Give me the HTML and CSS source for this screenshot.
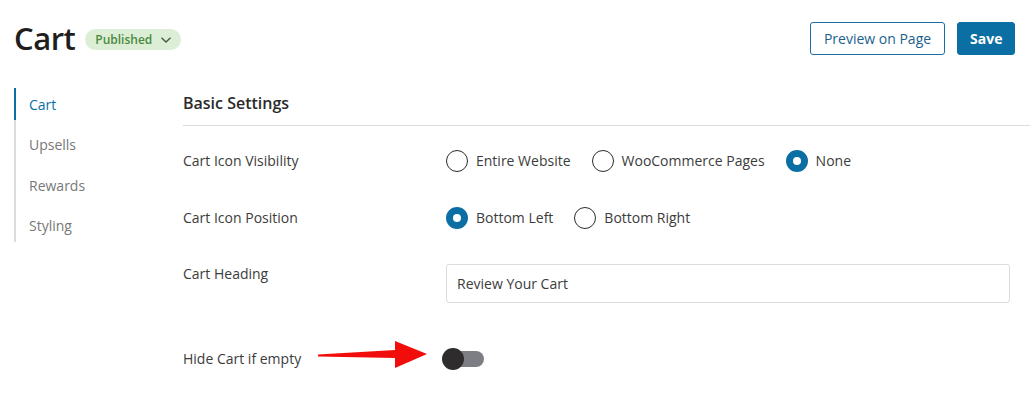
FILE: index.html
```html
<!DOCTYPE html>
<html>
<head>
<meta charset="utf-8">
<link rel="stylesheet" href="styles.css">
</head>
<body>
<header class="topbar">
  <div class="title-group">
    <h1 class="title">Cart</h1>
    <span class="badge">Published
      <svg class="chev" width="12" height="8" viewBox="0 0 12 8"><path d="M1.5 1.8 L6 6 L10.5 1.8" fill="none" stroke="#3d5a3a" stroke-width="1.3"/></svg>
    </span>
  </div>
  <div class="actions">
    <button class="btn btn-outline">Preview on Page</button>
    <button class="btn btn-primary">Save</button>
  </div>
</header>
<div class="layout">
  <nav class="sidenav">
    <a class="nav-item active">Cart</a>
    <a class="nav-item">Upsells</a>
    <a class="nav-item">Rewards</a>
    <a class="nav-item">Styling</a>
  </nav>
  <main class="content">
    <h2 class="section-title">Basic Settings</h2>
    <div class="row">
      <div class="label">Cart Icon Visibility</div>
      <div class="options">
        <label class="radio"><span class="dot"></span>Entire Website</label>
        <label class="radio"><span class="dot"></span>WooCommerce Pages</label>
        <label class="radio"><span class="dot on"></span>None</label>
      </div>
    </div>
    <div class="row">
      <div class="label">Cart Icon Position</div>
      <div class="options">
        <label class="radio"><span class="dot on"></span>Bottom Left</label>
        <label class="radio"><span class="dot"></span>Bottom Right</label>
      </div>
    </div>
    <div class="row row-top">
      <div class="label">Cart Heading</div>
      <div class="field">Review Your Cart</div>
    </div>
    <div class="row row-toggle">
      <div class="label">Hide Cart if empty</div>
      <div class="toggle"><span class="track"></span><span class="knob"></span></div>
      <svg class="arrow" width="112" height="32" viewBox="0 0 112 32"><path d="M0 13.5 L77 9 L77 0 L109 13 L77 27 L77 17 L0 15.5 Z" fill="#f20d0d"/></svg>
    </div>
  </main>
</div>
</body>
</html>
```

FILE: styles.css
```css
* { box-sizing: border-box; }
body {
  margin: 0;
  width: 1030px;
  height: 398px;
  background: #fff;
  font-family: "Open Sans", "Noto Sans", sans-serif;
  color: #3c3c3c;
  overflow: hidden;
}
.topbar {
  display: flex;
  justify-content: space-between;
  padding: 22px 15px 0 14px;
  height: 88px;
  align-items: flex-start;
}
.title-group {
  display: flex;
  align-items: center;
  gap: 10px;
  height: 33px;
}
.title {
  margin: 0;
  font-size: 31px;
  font-weight: 600;
  color: #1e1e1e;
  line-height: 33px;
  letter-spacing: -0.5px;
}
.badge {
  display: inline-flex;
  align-items: center;
  gap: 8px;
  height: 21px;
  padding: 0 9px 0 10px;
  border-radius: 11px;
  background: #dcefd6;
  color: #4b8a40;
  font-size: 12px;
  font-weight: 600;
  margin-top: 2px;
}
.actions {
  display: flex;
  gap: 12px;
}
.btn {
  font-family: inherit;
  height: 33px;
  border-radius: 3px;
  font-size: 14px;
  padding: 0 12px;
  cursor: pointer;
}
.btn-outline {
  width: 135px;
  background: #fff;
  border: 1px solid #1c6ea0;
  color: #1c5f8c;
}
.btn-primary {
  width: 58px;
  background: #0b6fa4;
  border: 1px solid #0b6fa4;
  color: #fff;
  font-weight: 700;
}
.layout {
  display: flex;
}
.sidenav {
  width: 169px;
  margin-left: 14px;
  display: flex;
  flex-direction: column;
  gap: 8.5px;
  border-left: 2px solid #dcdcde;
  align-self: flex-start;
  flex: none;
}
.nav-item {
  display: flex;
  align-items: center;
  height: 32px;
  padding-left: 13px;
  margin-left: -2px;
  border-left: 2px solid transparent;
  font-size: 14px;
  color: #787878;
}
.nav-item.active {
  border-left-color: #0b6fa4;
  color: #0b6fa4;
}
.content {
  flex: 1;
}
.section-title {
  margin: 0;
  padding: 3px 0 0 0;
  height: 34px;
  line-height: 24px;
  font-size: 16px;
  font-weight: 600;
  color: #2a2a2a;
  border-bottom: 1px solid #dcdcde;
  box-sizing: content-box;
}
.row {
  display: grid;
  grid-template-columns: 263px 1fr;
  align-items: center;
  height: 57px;
  padding-right: 20px;
  font-size: 14px;
  position: relative;
}
.row:nth-of-type(1) { margin-top: 6px; }
.row-top {
  align-items: start;
  padding-top: 18px;
  height: 84px;
}
.row-top .label { line-height: 20px; }
.options {
  display: flex;
  gap: 21px;
}
.radio {
  display: flex;
  align-items: center;
  gap: 8px;
  color: #3c3c3c;
}
.dot {
  width: 22px;
  height: 22px;
  border-radius: 50%;
  border: 1.5px solid #2c2c2c;
  flex: none;
}
.dot.on {
  border: 7px solid #0b6fa4;
}
.label {
  color: #3c3c3c;
}
.field {
  height: 39px;
  border: 1px solid #dcdcde;
  border-radius: 3px;
  display: flex;
  align-items: center;
  padding-left: 10px;
  color: #3c3c3c;
}
.toggle {
  position: relative;
  width: 42px;
  height: 22px;
  margin-left: -4px;
}
.track {
  position: absolute;
  left: 10px;
  top: 3px;
  width: 32px;
  height: 16px;
  border-radius: 8px;
  background: #7d7d84;
}
.knob {
  position: absolute;
  left: 0;
  top: 0;
  width: 22px;
  height: 22px;
  border-radius: 50%;
  background: #2f2c2e;
}
.arrow {
  position: absolute;
  left: 135px;
  top: 11px;
}
```
